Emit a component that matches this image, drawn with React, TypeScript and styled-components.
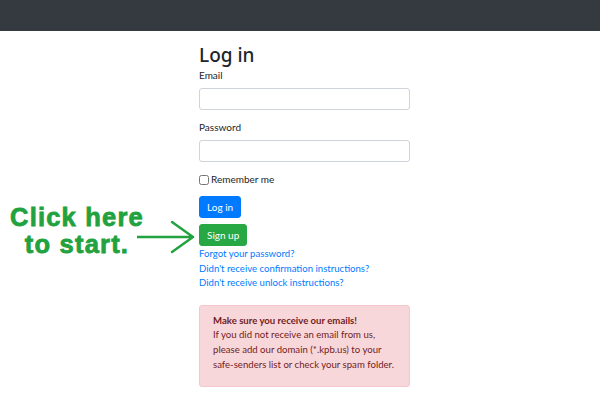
import React from "react";
import styled, { createGlobalStyle } from "styled-components";

const GlobalStyle = createGlobalStyle`
  body {
    margin: 0;
    background: #ffffff;
    font-family: Lato, "Noto Sans", sans-serif;
    font-size: 9.6px;
    color: #212529;
  }
`;

export default function App() {
  return (
    <>
      <GlobalStyle />
      <Navbar />
      <Page>
        <Column>
          <Heading>Log in</Heading>
          <FormGroup>
            <Label htmlFor="email">Email</Label>
            <Input id="email" type="email" />
          </FormGroup>
          <FormGroup>
            <Label htmlFor="password">Password</Label>
            <Input id="password" type="password" />
          </FormGroup>
          <CheckRow>
            <Checkbox type="checkbox" id="remember" />
            <label htmlFor="remember">Remember me</label>
          </CheckRow>
          <Button $variant="primary">Log in</Button>
          <Button $variant="success">Sign up</Button>
          <Links>
            <Link href="#">Forgot your password?</Link>
            <Link href="#">Didn't receive confirmation instructions?</Link>
            <Link href="#">Didn't receive unlock instructions?</Link>
          </Links>
          <Alert>
            <strong>Make sure you receive our emails!</strong>
            <br />
            If you did not receive an email from us, please add our domain
            (*.kpb.us) to your safe-senders list or check your spam folder.
          </Alert>
        </Column>
        <Callout>
          Click here
          <br />
          to start.
        </Callout>
        <Arrow width="60" height="34" viewBox="0 0 60 34">
          <path
            d="M0 17 H56 M35 2 L56 17 L35 32"
            fill="none"
            stroke="#22a23e"
            strokeWidth="2.4"
            strokeLinecap="round"
            strokeLinejoin="round"
          />
        </Arrow>
      </Page>
    </>
  );
}

const Navbar = styled.div`
  background: #343a40;
  height: 31px;
`;

const Page = styled.div`
  position: relative;
  height: 367px;
`;

const Column = styled.div`
  display: flex;
  flex-direction: column;
  align-items: flex-start;
  margin-left: 199px;
  padding-top: 12px;
  width: 211px;
`;

const Heading = styled.h2`
  font-family: "Noto Sans", sans-serif;
  font-size: 19px;
  font-weight: 500;
  line-height: 24px;
  margin: 0 0 1px;
  color: #212529;
`;

const FormGroup = styled.div`
  display: flex;
  flex-direction: column;
  margin-bottom: 10px;
  width: 100%;
`;

const Label = styled.label`
  font-size: 10px;
  line-height: 15px;
  margin-bottom: 5px;
`;

const Input = styled.input`
  box-sizing: border-box;
  height: 22px;
  width: 100%;
  border: 1px solid #ced4da;
  border-radius: 3px;
  background: #fff;
  margin: 0;
`;

const CheckRow = styled.div`
  display: flex;
  align-items: center;
  gap: 2px;
  font-size: 10px;
  line-height: 15px;
  margin-bottom: 9px;
`;

const Checkbox = styled.input`
  width: 10px;
  height: 10px;
  margin: 0;
`;

const Button = styled.button<{ $variant: "primary" | "success" }>`
  font-family: inherit;
  font-size: 10px;
  color: #fff;
  height: 22px;
  padding: 0 7px;
  border: 1px solid;
  border-radius: 3px;
  margin-bottom: 6px;
  background: ${({ $variant }) => ($variant === "primary" ? "#007bff" : "#28a745")};
  border-color: ${({ $variant }) => ($variant === "primary" ? "#007bff" : "#28a745")};
`;

const Links = styled.div`
  display: flex;
  flex-direction: column;
  margin-top: -5px;
`;

const Link = styled.a`
  color: #007bff;
  text-decoration: none;
  line-height: 14.5px;
`;

const Alert = styled.div`
  box-sizing: border-box;
  width: 100%;
  margin-top: 14px;
  padding: 8px 6px 14px 13px;
  line-height: 14.7px;
  background: #f8d7da;
  border: 1px solid #f5c6cb;
  border-radius: 3px;
  color: #721c24;
`;

const Callout = styled.div`
  position: absolute;
  left: 2px;
  top: 173px;
  width: 150px;
  text-align: center;
  font-family: "Liberation Sans", Arial, sans-serif;
  font-weight: bold;
  font-size: 25.5px;
  letter-spacing: 1.2px;
  line-height: 26.5px;
  -webkit-text-stroke: 0.8px #22a23e;
  color: #22a23e;
`;

const Arrow = styled.svg`
  position: absolute;
  left: 137px;
  top: 189px;
`;
